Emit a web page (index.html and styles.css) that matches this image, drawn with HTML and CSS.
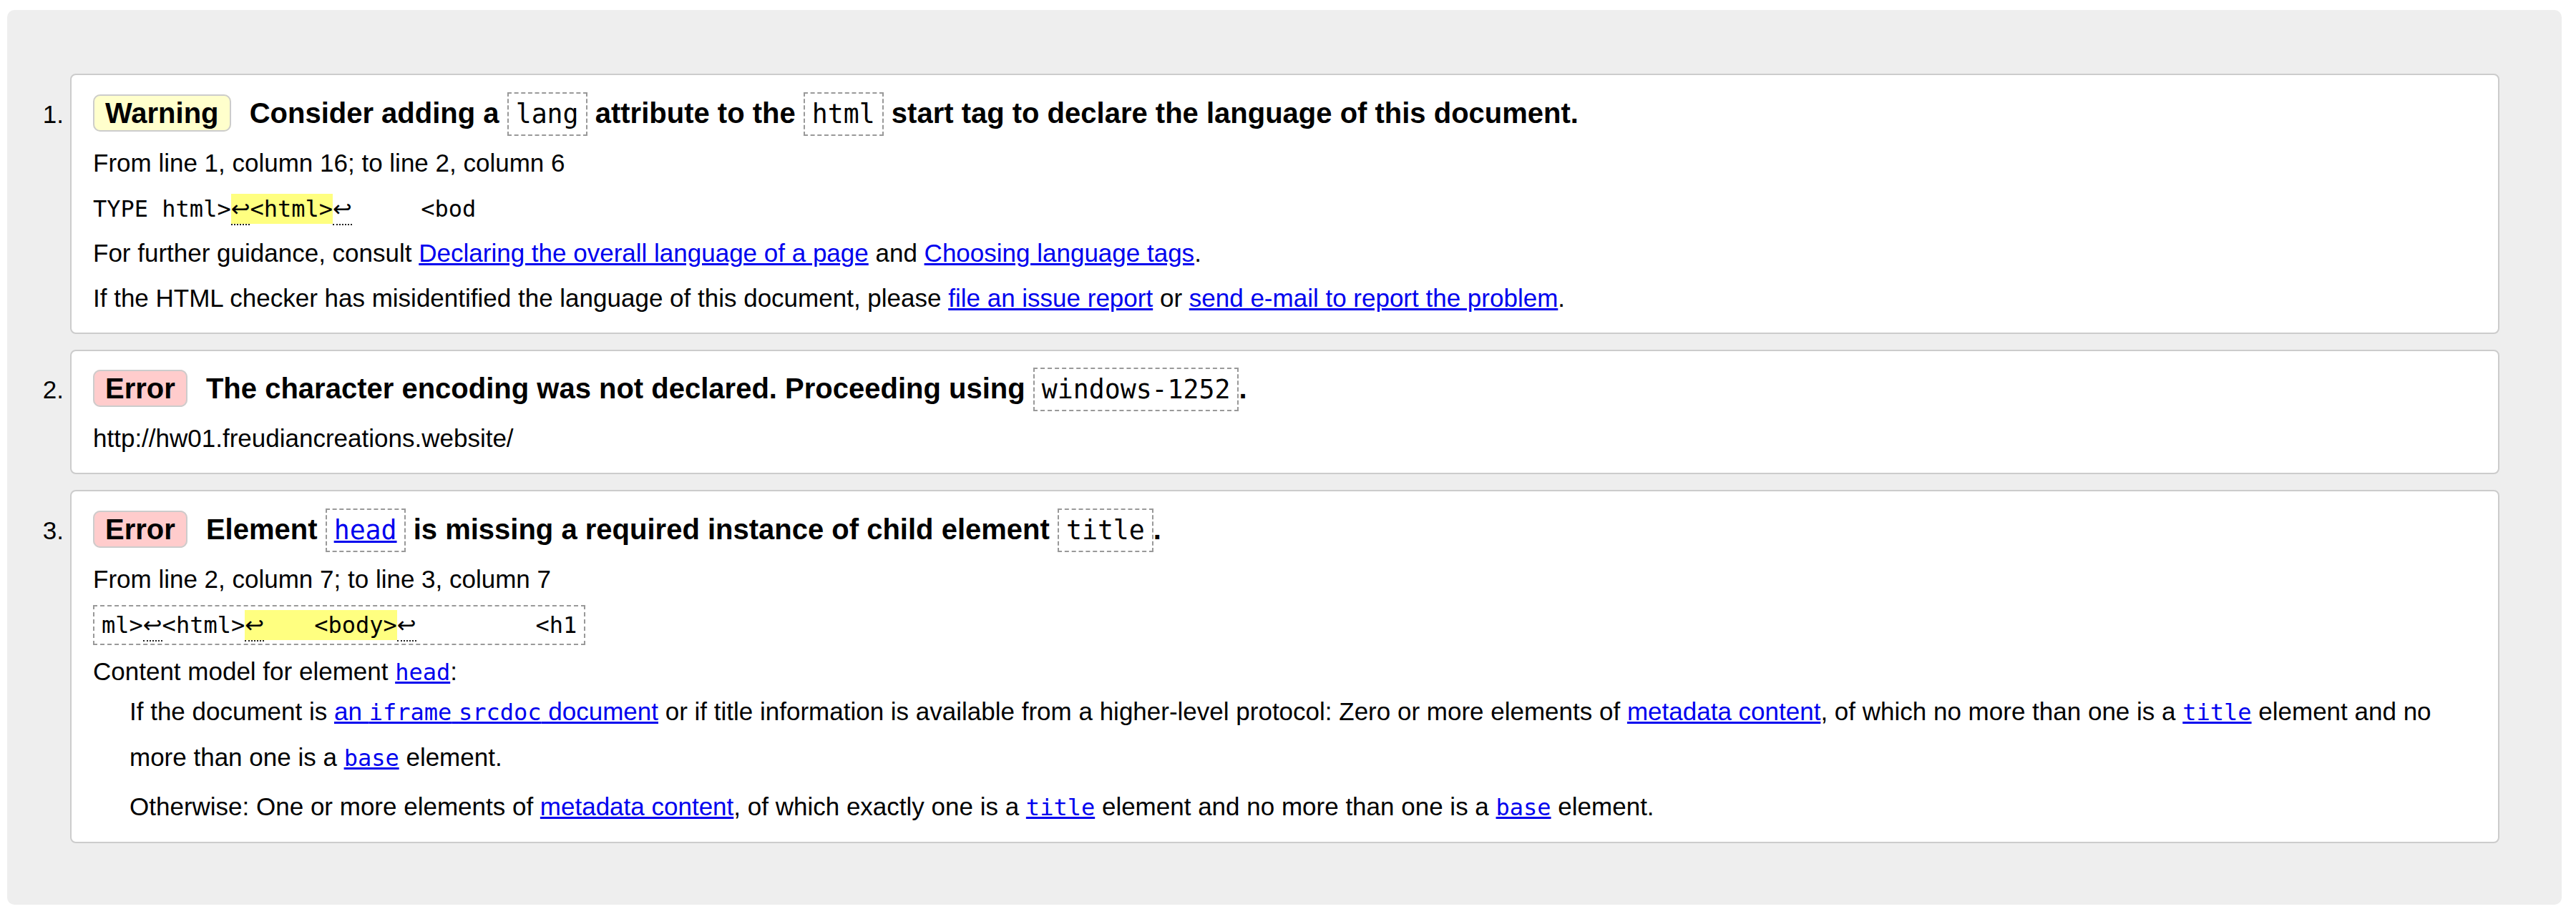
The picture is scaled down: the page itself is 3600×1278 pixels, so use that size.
FILE: index.html
```html
<!DOCTYPE html>
<html lang="en">
<head>
<meta charset="utf-8">
<title>Validation messages</title>
<link rel="stylesheet" href="styles.css">
</head>
<body>
<div class="results">
  <ol class="messages">
    <li class="msg">
      <div class="card">
        <p class="headline"><strong class="badge warning">Warning</strong> <span>Consider adding a <code class="term">lang</code> attribute to the <code class="term">html</code> start tag to declare the language of this document.</span></p>
        <p>From line 1, column 16; to line 2, column 6</p>
        <p><code class="extract">TYPE html&gt;<mark><span class="lf">↩</span>&lt;html&gt;</mark><span class="lf">↩</span>     &lt;bod</code></p>
        <p>For further guidance, consult <a href="#">Declaring the overall language of a page</a> and <a href="#">Choosing language tags</a>.</p>
        <p>If the HTML checker has misidentified the language of this document, please <a href="#">file an issue report</a> or <a href="#">send e-mail to report the problem</a>.</p>
      </div>
    </li>
    <li class="msg">
      <div class="card">
        <p class="headline"><strong class="badge error">Error</strong> <span>The character encoding was not declared. Proceeding using <code class="term">windows-1252</code>.</span></p>
        <p>http://hw01.freudiancreations.website/</p>
      </div>
    </li>
    <li class="msg">
      <div class="card">
        <p class="headline"><strong class="badge error">Error</strong> <span>Element <code class="term"><a href="#">head</a></code> is missing a required instance of child element <code class="term">title</code>.</span></p>
        <p>From line 2, column 7; to line 3, column 7</p>
        <p><code class="extract boxed">ml&gt;<span class="lf">↩</span>&lt;html&gt;<mark><span class="lf">↩</span><span class="gap-a">   </span>&lt;body&gt;</mark><span class="lf">↩</span><span class="gap-b">        </span>&lt;h1</code></p>
        <dl class="model">
          <dt>Content model for element <a href="#"><code>head</code></a>:</dt>
          <dd>
            <p>If the document is <a href="#">an <code>iframe</code> <code>srcdoc</code> document</a> or if title information is available from a higher-level protocol: Zero or more elements of <a href="#">metadata content</a>, of which no more than one is a <a href="#"><code>title</code></a> element and no more than one is a <a href="#"><code>base</code></a> element.</p>
            <p>Otherwise: One or more elements of <a href="#">metadata content</a>, of which exactly one is a <a href="#"><code>title</code></a> element and no more than one is a <a href="#"><code>base</code></a> element.</p>
          </dd>
        </dl>
      </div>
    </li>
  </ol>
</div>
</body>
</html>
```
FILE: styles.css
```css
html, body {
  margin: 0;
  padding: 0;
  background: #fff;
}

body {
  font-family: "Liberation Sans", Arial, sans-serif;
  font-size: 35px;
  color: #000;
}

a {
  color: #0000ee;
}

.results {
  margin: 14px 20px 0 10px;
  padding: 89px 87px 86px 0;
  background: #eeeeee;
  border-radius: 10px;
}

.messages {
  list-style: none;
  margin: 0;
  padding: 0;
  counter-reset: msg;
}

.msg {
  display: flex;
  align-items: baseline;
  counter-increment: msg;
}

.msg + .msg {
  margin-top: 22px;
}

.msg::before {
  content: counter(msg) ".";
  flex: 0 0 88px;
  box-sizing: border-box;
  text-align: right;
  padding-right: 9px;
  line-height: 63px;
}

.card {
  flex: 1;
  min-width: 0;
  background: #fff;
  border: 2px solid #cccccc;
  border-radius: 8px;
  padding: 15.5px 30px 17px 30px;
}

.card p {
  margin: 0;
  line-height: 63px;
}

.card p.headline {
  font-size: 40px;
  font-weight: bold;
  line-height: 75px;
}

.badge {
  padding: 2px 15px;
  border: 2px solid #cccccc;
  border-radius: 10px;
  margin-right: 15px;
}

.badge.warning {
  background: #ffffcc;
}

.badge.error {
  background: #ffcccc;
}

code {
  font-family: "DejaVu Sans Mono", monospace;
  font-size: 32px;
  line-height: 1;
}

code.term {
  font-size: 36.5px;
  font-weight: normal;
  padding: 7px 10px;
  border: 2px dashed #999999;
}

code.extract {
  white-space: pre;
}

code.extract.boxed {
  padding: 7px 10px;
  border: 2px dashed #999999;
}

mark {
  background: #ffff80;
  color: #000;
  padding: 2px 0;
}

.lf {
  font-family: "DejaVu Sans", sans-serif;
  padding-bottom: 2px;
  border-bottom: 2px dotted #222;
}

.gap-a {
  letter-spacing: 4.1px;
}

.gap-b {
  letter-spacing: 1.6px;
}

.model {
  margin: 11.5px 0 0 0;
}

.model dt {
  line-height: 47px;
}

.model dd {
  margin: 0 0 0 51px;
}

.model dd p {
  line-height: 64px;
}

.model dd p:first-child {
  margin-top: 1px;
}

.model dd p + p {
  margin-top: 5px;
}
```
